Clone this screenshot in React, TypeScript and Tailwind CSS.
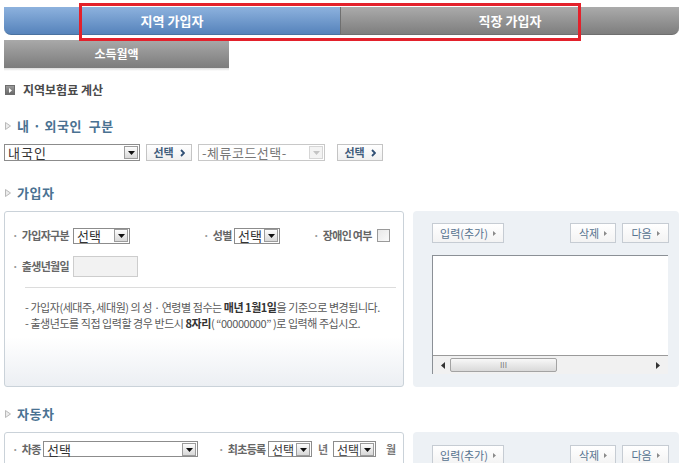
import React from 'react';

function Arrow({ disabled }: { disabled?: boolean }) {
  return (
    <span
      className={`flex h-[13px] w-[14px] shrink-0 items-end justify-center pb-[3px] border ${
        disabled ? 'border-[#d6d6d6] bg-[#f3f3f3]' : 'border-[#9c9c9c] bg-gradient-to-b from-[#fdfdfd] to-[#d8d8d8]'
      }`}
    >
      <svg width="7" height="4" viewBox="0 0 7 4">
        <path d="M0 0h7L3.5 4z" fill={disabled ? '#c4c4c4' : '#111'} />
      </svg>
    </span>
  );
}

function Select({ text, className, disabled }: { text: string; className: string; disabled?: boolean }) {
  return (
    <div
      className={`flex shrink-0 items-center justify-between border bg-white pl-[3px] pr-[1px] leading-[15px] ${
        disabled ? 'border-[#c8c8c8] text-[#777]' : 'border-[#8c8c8c] text-[#333]'
      } ${className}`}
    >
      <span className="whitespace-nowrap">{text}</span>
      <Arrow disabled={disabled} />
    </div>
  );
}

function PickButton({ className }: { className: string }) {
  return (
    <div
      className={`flex h-[17px] shrink-0 items-center justify-center gap-[6px] border border-[#c4c4c4] bg-gradient-to-b from-white to-[#f0f0f0] text-[11px] font-bold text-[#3f5d7c] ${className}`}
    >
      선택
      <svg width="5" height="8" viewBox="0 0 5 8">
        <path d="M1 1l3 3-3 3" fill="none" stroke="#2f4f74" strokeWidth="1.8" />
      </svg>
    </div>
  );
}

function PanelButton({ label, className }: { label: string; className: string }) {
  return (
    <div
      className={`flex h-[20px] items-center justify-center gap-[5px] border border-[#c6ccd3] bg-gradient-to-b from-white to-[#f3f3f3] text-[11px] text-[#56728f] ${className}`}
    >
      {label}
      <svg width="3" height="5" viewBox="0 0 3 5">
        <path d="M0 0l3 2.5L0 5z" fill="#8a8a8a" />
      </svg>
    </div>
  );
}

function SubHeading({ title, className }: { title: string; className: string }) {
  return (
    <div className={`flex h-[16px] items-center pl-[5px] ${className}`}>
      <svg width="6" height="8" viewBox="0 0 6 8" className="mr-[6px]">
        <path d="M0.5 0.5L5.5 4L0.5 7.5z" fill="#ececec" stroke="#b9b9b9" />
      </svg>
      <span className="whitespace-pre text-[13px] font-bold tracking-[0.5px] text-[#4a7292]">{title}</span>
    </div>
  );
}

function Label({ text, className }: { text: string; className: string }) {
  return (
    <span className={`shrink-0 whitespace-nowrap text-[11px] font-semibold tracking-[-0.7px] text-[#666] ${className}`}>
      <span className="mr-[4px] text-[#999]">·</span>
      {text}
    </span>
  );
}

function RightPanel({ children, className }: { children?: React.ReactNode; className: string }) {
  return (
    <div className={`w-[266px] rounded-[4px] bg-[#edf1f5] pl-[19px] pr-[10px] ${className}`}>
      <div className="flex items-center justify-between">
        <PanelButton label="입력(추가)" className="w-[72px]" />
        <div className="flex gap-[6px]">
          <PanelButton label="삭제" className="w-[46px]" />
          <PanelButton label="다음" className="w-[47px]" />
        </div>
      </div>
      {children}
    </div>
  );
}

export default function App() {
  return (
    <div className="relative h-[463px] w-[689px] overflow-hidden bg-white font-['Noto_Sans_CJK_KR','Noto_Sans',sans-serif] text-[#555]">
      {/* tabs */}
      <div className="ml-[4px] mt-[7px] w-[675px]">
        <div className="flex h-[28px]">
          <div className="flex w-[336px] items-center justify-center rounded-bl-[7px] border-b border-[#4a72a0] bg-gradient-to-b from-[#8db2de] to-[#5683bb] text-[13px] font-bold text-white">
            지역 가입자
          </div>
          <div className="flex flex-1 items-center justify-center rounded-br-[7px] border-b border-l border-[#6f6f6f] bg-gradient-to-b from-[#ababab] to-[#7e7e7e] text-[13px] font-bold text-white">
            직장 가입자
          </div>
        </div>
        <div className="mt-[5px] flex h-[28px] w-[225px] items-center justify-center bg-gradient-to-b from-[#a9a9a9] to-[#7c7c7c] text-[12px] font-bold text-white">
          소득월액
        </div>
        <div className="h-[3px] w-[225px] bg-gradient-to-b from-[#dcdcdc] to-white" />
      </div>

      {/* title */}
      <div className="mt-[11px] flex h-[16px] items-center pl-[5px]">
        <span className="mr-[8px] flex h-[10px] w-[10px] items-center justify-center border border-[#6d6d6d] bg-gradient-to-b from-[#9a9a9a] to-[#6a6a6a]">
          <svg width="3" height="5" viewBox="0 0 3 5">
            <path d="M0 0l3 2.5L0 5z" fill="#fff" />
          </svg>
        </span>
        <span className="text-[12px] font-bold text-[#4a4a4a]">지역보험료 계산</span>
      </div>

      <SubHeading title="내 · 외국인  구분" className="mt-[20px]" />

      <div className="ml-[4px] mt-[10px] flex h-[17px] items-center">
        <Select text="내국인" className="h-[17px] w-[136px] text-[13px] tracking-[1px]" />
        <PickButton className="ml-[6px] w-[46px]" />
        <Select text="-체류코드선택-" disabled className="ml-[6px] h-[17px] w-[127px] text-[13px] tracking-[0.5px]" />
        <PickButton className="ml-[12px] w-[46px]" />
      </div>

      <SubHeading title="가입자" className="mt-[24px]" />

      <div className="ml-[4px] mt-[10px] flex gap-[9px]">
        <div className="h-[176px] w-[400px] rounded-[3px] border border-[#cad2d9] bg-gradient-to-b from-white from-[72%] to-[#eceff3] pl-[7px] pt-[16px]">
          <div className="flex h-[15px] items-center">
            <Label text="가입자구분" className="w-[61px]" />
            <Select text="선택" className="h-[16px] w-[57px] text-[13px]" />
            <Label text="성별" className="ml-[73px] w-[31px]" />
            <Select text="선택" className="h-[16px] w-[46px] text-[13px]" />
            <Label text="장애인 여부" className="ml-[33px] w-[64px]" />
            <span className="h-[13px] w-[13px] shrink-0 border border-[#9a9a9a] bg-gradient-to-br from-[#e8e8e8] to-[#fafafa]" />
          </div>
          <div className="mt-[13px] flex h-[21px] items-center">
            <Label text="출생년월일" className="w-[61px]" />
            <div className="h-[21px] w-[65px] border border-[#cdcdcd] bg-[#f2f2f2]" />
          </div>
          <div className="ml-[13px] mt-[10px] h-px w-[371px] bg-[#dcdcdc]" />
          <div className="ml-[13px] mt-[11px] whitespace-nowrap text-[11px] leading-[16px] tracking-[-0.45px] text-[#5a5a5a]">
            <p>
              - 가입자(세대주, 세대원) 의 성 · 연령별 점수는 <b className="text-[#333]">매년 1월1일</b>을 기준으로 변경됩니다.
            </p>
            <p>
              - 출생년도를 직접 입력할 경우 반드시 <b className="text-[#333]">8자리</b>( “00000000” )로 입력해 주십시오.
            </p>
          </div>
        </div>

        <RightPanel className="h-[176px] pt-[12px]">
          <div className="mt-[12px] h-[119px] w-[236px] border-l border-t border-[#8b9096] bg-white">
            <div className="h-[99px]" />
            <div className="flex h-[19px] items-center border-t border-[#9a9a9a] bg-[#f1f1f1] pl-[8px] pr-[8px]">
              <svg width="4" height="7" viewBox="0 0 4 7">
                <path d="M4 0v7L0 3.5z" fill="#333" />
              </svg>
              <div className="ml-[5px] flex h-[14px] w-[107px] items-center justify-center rounded-[2px] border border-[#a3a3a3] bg-gradient-to-b from-[#f8f8f8] to-[#d9d9d9] text-[8px] leading-none text-[#777]">
                III
              </div>
              <div className="flex-1" />
              <svg width="4" height="7" viewBox="0 0 4 7">
                <path d="M0 0v7l4-3.5z" fill="#333" />
              </svg>
            </div>
          </div>
        </RightPanel>
      </div>

      <SubHeading title="자동차" className="mt-[19px]" />

      <div className="ml-[4px] mt-[10px] flex gap-[9px]">
        <div className="h-[60px] w-[400px] rounded-t-[3px] border border-[#cad2d9] bg-white pl-[7px] pt-[8px]">
          <div className="flex h-[16px] items-center">
            <Label text="차종" className="w-[31px]" />
            <Select text="선택" className="h-[16px] w-[155px] text-[13px]" />
            <Label text="최초등록 ·" className="ml-[20px] w-[50px]" />
            <Select text="선택" className="h-[16px] w-[44px] text-[12px]" />
            <span className="ml-[6px] w-[15px] shrink-0 text-[11px] font-semibold text-[#777]">년</span>
            <Select text="선택" className="h-[16px] w-[43px] text-[12px]" />
            <span className="ml-[10px] shrink-0 text-[11px] font-semibold text-[#777]">월</span>
          </div>
        </div>
        <RightPanel className="h-[60px] pt-[13px]" />
      </div>

      {/* highlight box */}
      <div className="absolute left-[79px] top-[3px] h-[38px] w-[502px] border-[3px] border-[#e3212b]" />
    </div>
  );
}
